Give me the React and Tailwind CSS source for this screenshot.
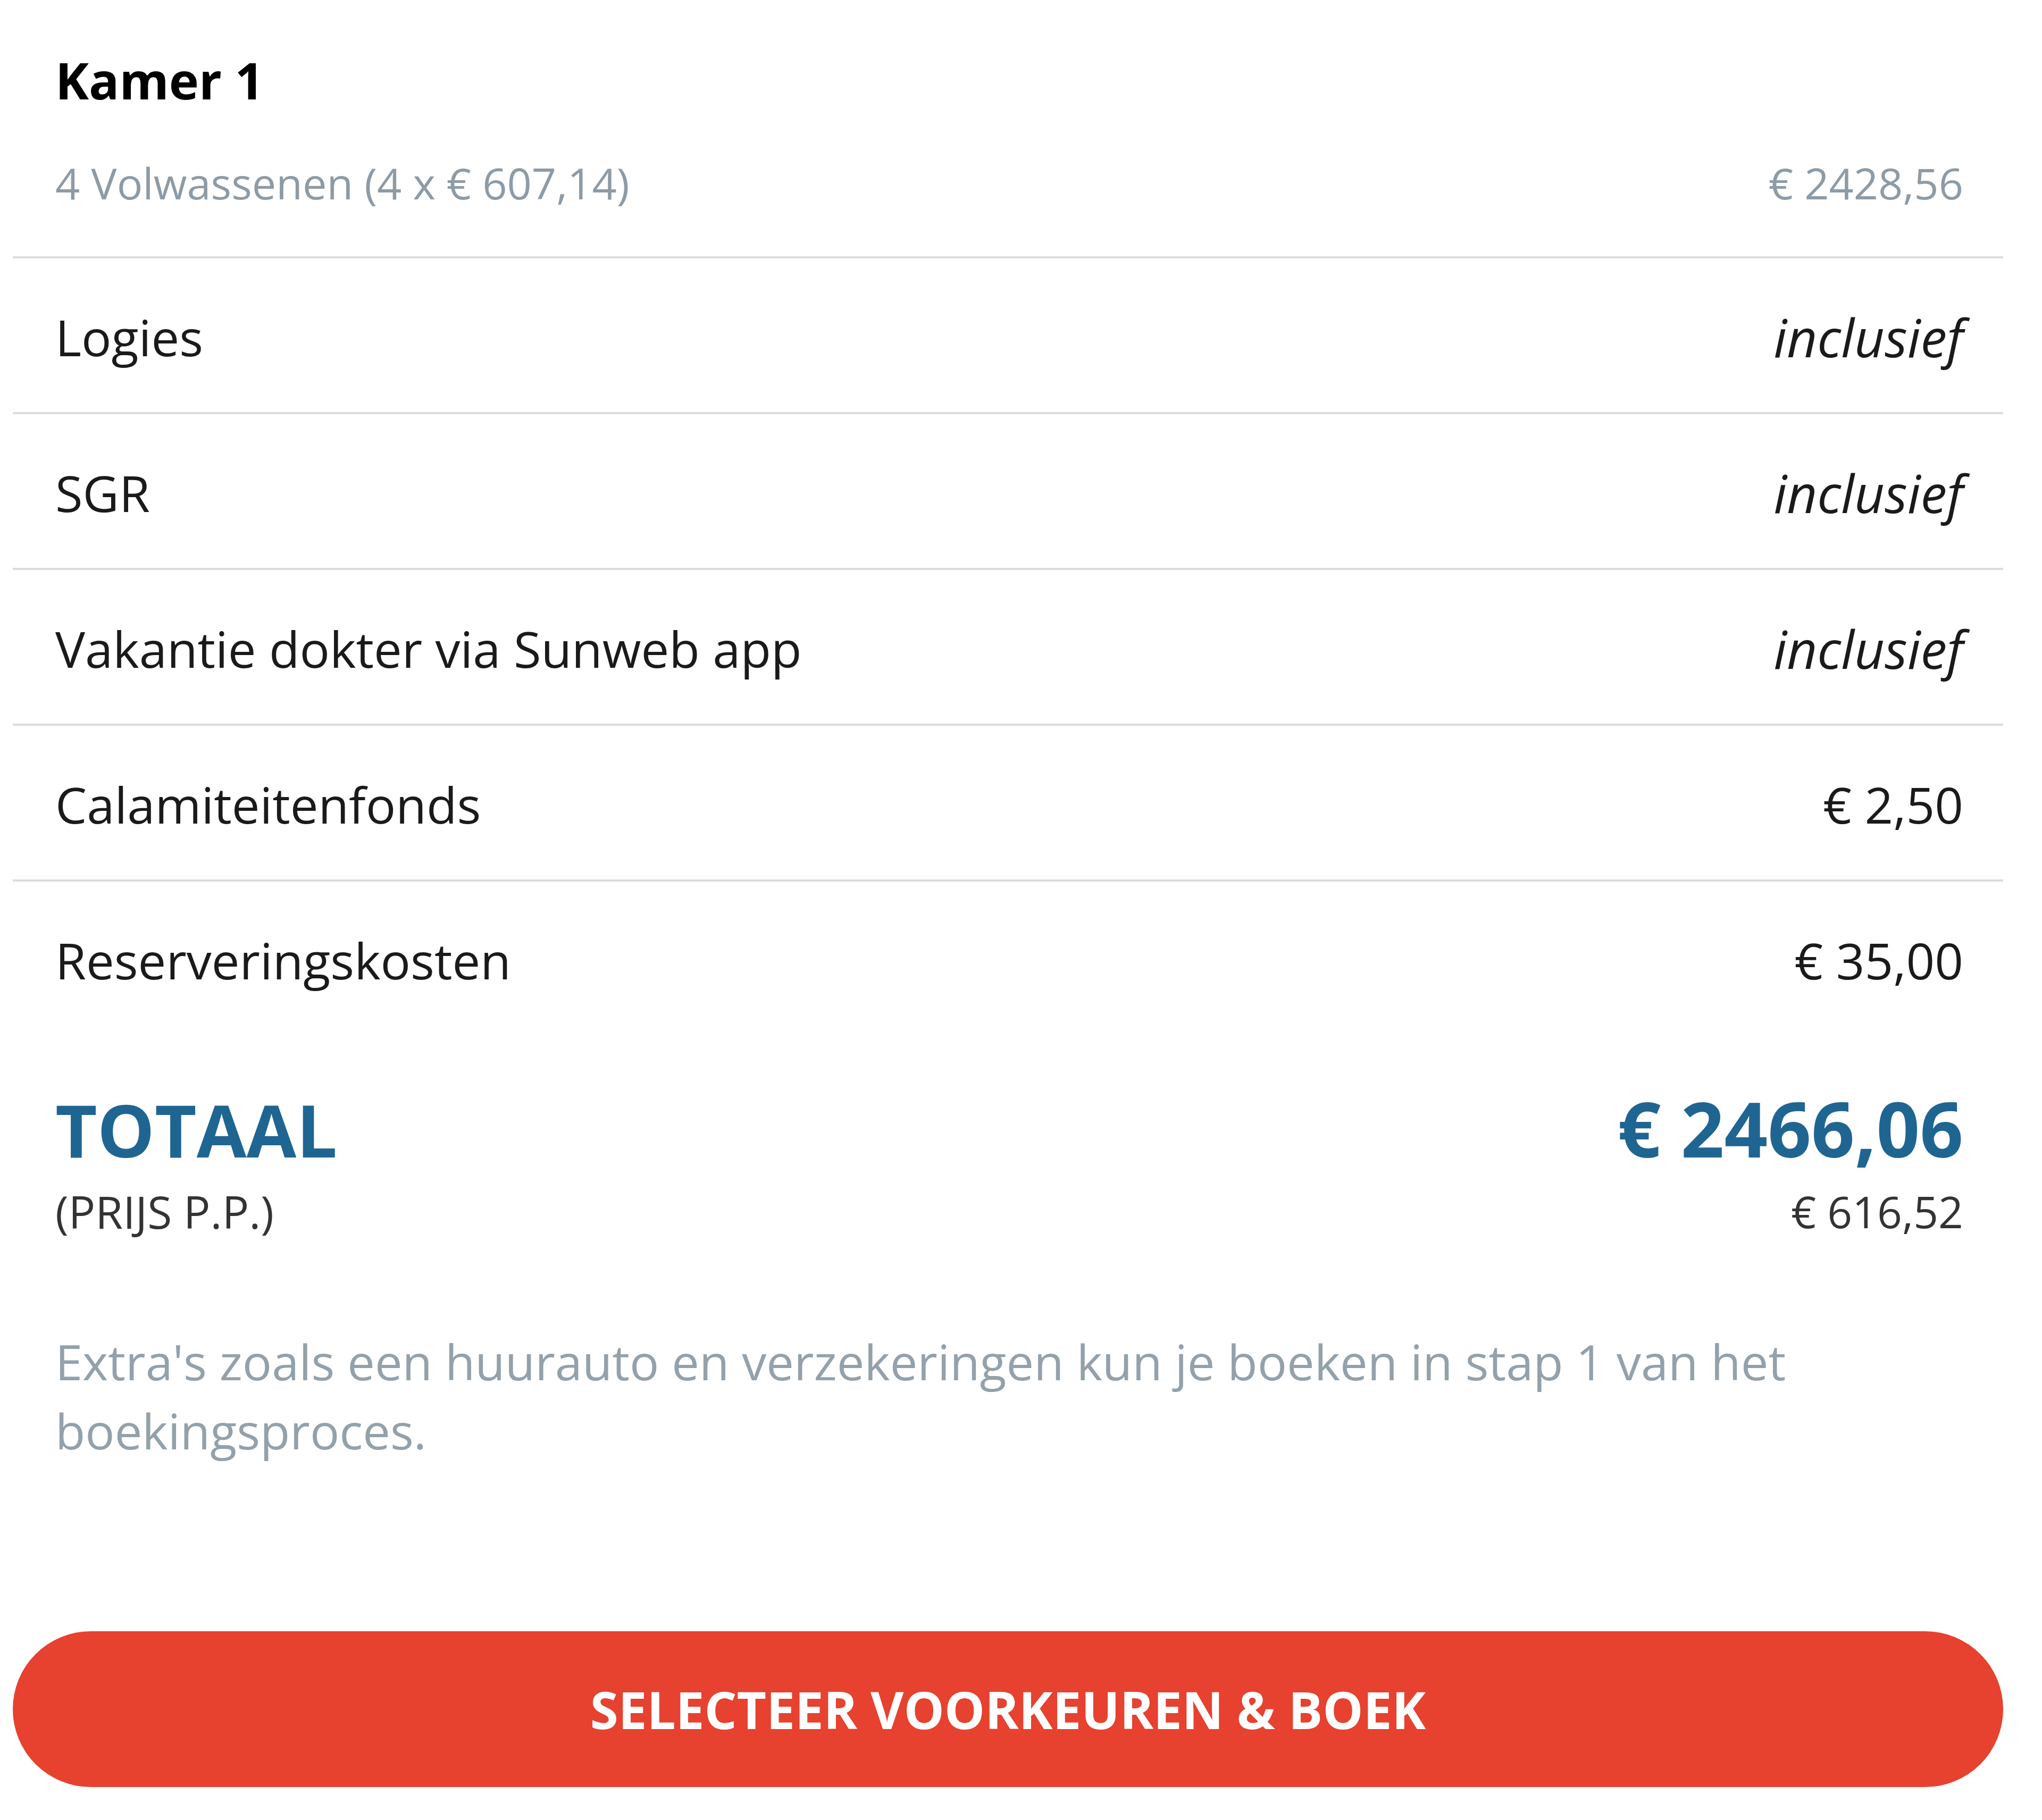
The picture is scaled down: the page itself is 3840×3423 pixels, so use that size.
export default function App() {
  const rows = [
    { label: "Logies", value: "inclusief", italic: true },
    { label: "SGR", value: "inclusief", italic: true },
    { label: "Vakantie dokter via Sunweb app", value: "inclusief", italic: true },
    { label: "Calamiteitenfonds", value: "€ 2,50" },
    { label: "Reserveringskosten", value: "€ 35,00" },
  ];
  return (
    <div className="min-h-[3423px] w-[3840px] bg-white font-['Open_Sans',sans-serif] text-[#1a1a1a]">
      <div className="ml-[24px] w-[3743px] pb-[66px]">
        <div className="pl-[80px] pr-[75px] pt-[103px]">
          <h2 className="text-[95px] font-bold leading-none text-black">Kamer 1</h2>
          <div className="mt-[105px] flex justify-between text-[81px] leading-none text-[#8d9ba6]">
            <span>4 Volwassenen (4 x € 607,14)</span>
            <span>€ 2428,56</span>
          </div>
        </div>

        <div className="mt-[98px]">
          {rows.map((r) => (
            <div
              key={r.label}
              className="flex h-[293px] items-center justify-between border-t-[4px] border-[#dcdcdc] pl-[80px] pr-[75px] pt-[6px] text-[94px] leading-none"
            >
              <span>{r.label}</span>
              <span className={r.italic ? "text-[99px] italic" : ""}>{r.value}</span>
            </div>
          ))}
        </div>

        <div className="mt-[103px] pl-[80px] pr-[75px]">
          <div className="flex items-end justify-between font-bold leading-none text-[#1f6592]">
            <span className="text-[136px]">TOTAAL</span>
            <span className="text-[143px]">€ 2466,06</span>
          </div>
          <div className="mt-[44px] flex justify-between text-[84px] leading-none text-[#333333]">
            <span>(PRIJS P.P.)</span>
            <span className="text-[82px]">€ 616,52</span>
          </div>
          <p className="mt-[175px] text-[92px] leading-[130px] text-[#93a1ab]">
            Extra's zoals een huurauto en verzekeringen kun je boeken in stap 1 van het
            <br />
            boekingsproces.
          </p>
        </div>

        <button className="mt-[312px] flex h-[293px] w-full items-center justify-center rounded-full bg-[#e7412f] text-[96px] font-bold uppercase leading-none text-white">
          Selecteer voorkeuren &amp; boek
        </button>
      </div>
    </div>
  );
}
